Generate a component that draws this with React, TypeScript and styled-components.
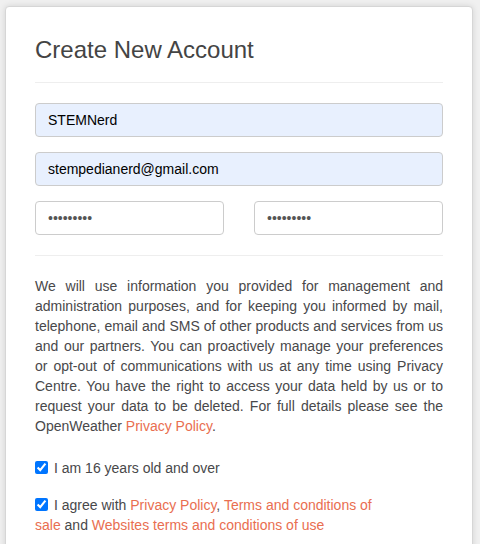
import React from 'react';
import styled, { createGlobalStyle } from 'styled-components';

const GlobalStyle = createGlobalStyle`
  html, body {
    margin: 0;
    padding: 0;
    background: #f0f0f0;
  }
  body {
    font-family: "Liberation Sans", Arial, sans-serif;
  }
`;

const Page = styled.div`
  padding: 6px 6px 0 5px;
  height: 544px;
  box-sizing: border-box;
  overflow: hidden;
`;

const Card = styled.div`
  background: #fff;
  border: 1px solid #d6d6d6;
  border-radius: 4px;
  box-shadow: 0 0 6px rgba(0, 0, 0, 0.12);
  padding: 30px 29px 40px;
  width: 408px;
`;

const Title = styled.h2`
  margin: 0;
  font-size: 24px;
  font-weight: 400;
  line-height: 1.1;
  color: #444;
`;

const Divider = styled.hr<{ $top: number; $bottom: number }>`
  border: 0;
  border-top: 1px solid #eee;
  margin: ${(p) => `${p.$top}px 0 ${p.$bottom}px`};
`;

const Field = styled.input<{ $filled?: boolean }>`
  display: block;
  width: 100%;
  height: 34px;
  box-sizing: border-box;
  padding: 0 12px;
  border: 1px solid #ccc;
  border-radius: 4px;
  background: ${(p) => (p.$filled ? '#e8f0fe' : '#fff')};
  font-family: "Liberation Sans", Arial, sans-serif;
  font-size: 14px;
  color: ${(p) => (p.$filled ? '#000' : '#555')};
  outline: none;
`;

const Stack = styled.div`
  display: flex;
  flex-direction: column;
  gap: 15px;
`;

const Row = styled.div`
  display: grid;
  grid-template-columns: 1fr 1fr;
  gap: 30px;
`;

const Notice = styled.p`
  margin: 0;
  font-size: 14px;
  line-height: 20px;
  color: #48484a;
  text-align: justify;
`;

const Link = styled.a`
  color: #e96e50;
  text-decoration: none;
`;

const Check = styled.label<{ $top: number }>`
  display: block;
  max-width: 345px;
  margin-top: ${(p) => p.$top}px;
  font-size: 14px;
  line-height: 20px;
  color: #48484a;
`;

const Box = styled.input`
  margin: 0 6px 0 0;
  width: 13px;
  height: 13px;
  vertical-align: -1px;
`;

export default function App() {
  return (
    <>
      <GlobalStyle />
      <Page>
        <Card>
          <Title>Create New Account</Title>
          <Divider $top={19} $bottom={20} />
          <Stack>
            <Field $filled readOnly value="STEMNerd" />
            <Field $filled readOnly value="stempedianerd@gmail.com" />
            <Row>
              <Field type="password" readOnly value="123456789" />
              <Field type="password" readOnly value="123456789" />
            </Row>
          </Stack>
          <Divider $top={20} $bottom={20} />
          <Notice>
            We will use information you provided for management and administration purposes, and for
            keeping you informed by mail, telephone, email and SMS of other products and services from us
            and our partners. You can proactively manage your preferences or opt-out of communications
            with us at any time using Privacy Centre. You have the right to access your data held by us
            or to request your data to be deleted. For full details please see the OpenWeather{' '}
            <Link href="#">Privacy Policy</Link>.
          </Notice>
          <Check $top={22}>
            <Box type="checkbox" defaultChecked />I am 16 years old and over
          </Check>
          <Check $top={17}>
            <Box type="checkbox" defaultChecked />I agree with <Link href="#">Privacy Policy</Link>,{' '}
            <Link href="#">Terms and conditions of sale</Link> and{' '}
            <Link href="#">Websites terms and conditions of use</Link>
          </Check>
        </Card>
      </Page>
    </>
  );
}
